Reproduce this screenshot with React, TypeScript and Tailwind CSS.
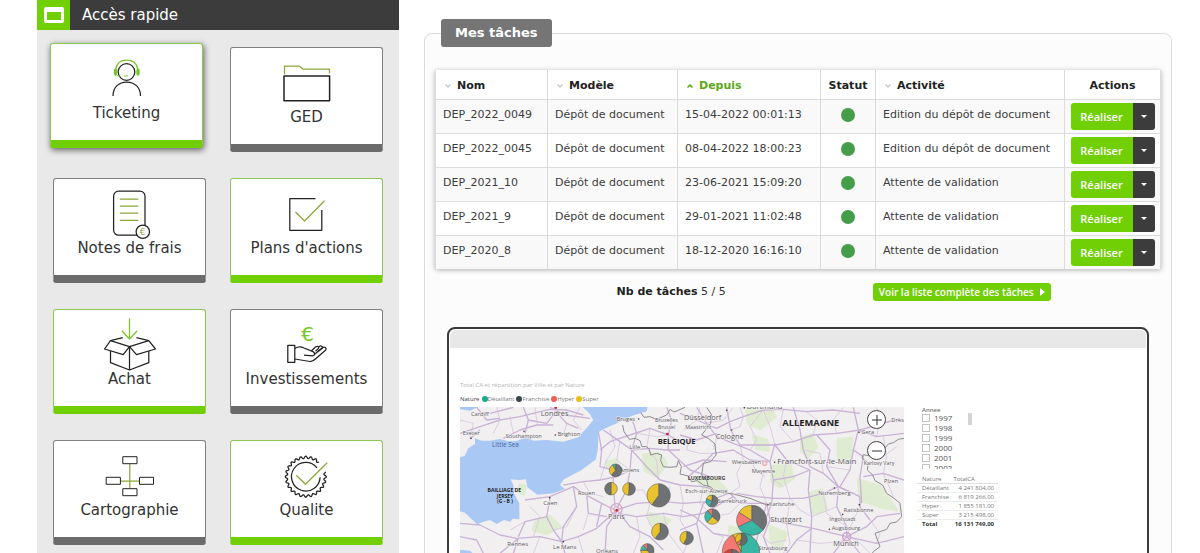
import type { ReactNode } from "react"
import { ChevronDown, ChevronUp } from "lucide-react"

const GREEN = "#76c62a"
const OLIVE = "#8aa83a"
const INK = "#222222"

function gearPath() {
  const points: string[] = []
  for (let deg = -14; deg <= 312; deg += 2) {
    const a = (deg * Math.PI) / 180
    const r = 19.4 + 1.2 * Math.cos(24 * a)
    points.push(`${(28.8 + r * Math.cos(a)).toFixed(2)} ${(27.7 + r * Math.sin(a)).toFixed(2)}`)
  }
  return "M" + points.join("L")
}

const icons: Record<string, ReactNode> = {
  ticketing: (
    <>
      <circle cx="29.5" cy="20" r="8.3" />
      <path d="M16 44C16 35 22 30 29.7 30S43.5 35 43.5 44" />
      <g stroke={GREEN}>
        <path d="M18.6 17C20 11 24.5 8.2 29.6 8.2S39.5 11 40.8 17" />
        <path d="M19 22c1 2 3 2.5 5 2.5M27 24h4" strokeWidth="1" />
        <rect x="17.5" y="17" width="2" height="6" rx="1" fill={GREEN} />
        <rect x="40" y="17" width="2" height="6" rx="1" fill={GREEN} />
      </g>
    </>
  ),
  ged: (
    <>
      <rect x="7" y="20" width="45.6" height="24.7" strokeWidth="1.5" />
      <path d="M7.5 18.2V10.2H22.5L26 13.2H52.5V17.3" stroke={OLIVE} />
    </>
  ),
  notes: (
    <>
      <rect x="13.6" y="4.2" width="31.4" height="44" rx="5" />
      <path d="M19.8 12H38.3M19.8 19H38.3M19.8 26H38.3M19.8 33.3H38.3" stroke={OLIVE} />
      <circle cx="42.8" cy="44.7" r="6.7" fill="white" />
      <text x="42.6" y="48" textAnchor="middle" fontSize="9" fill={OLIVE} stroke="none">€</text>
    </>
  ),
  plans: (
    <>
      <path d="M38.5 11.7H12.8V43.3H44.8V23" />
      <path d="M18.5 25L27.5 34L47.5 13.7" stroke={OLIVE} />
    </>
  ),
  achat: (
    <>
      <path d="M29.5 .3V21M21.8 12.7L29.5 21L37.2 12.7" stroke={GREEN} />
      <path d="M29.5 28.7L10.5 22.7L4.5 31L23.2 36.7ZM29.5 28.7L48.8 22.7L55.5 31L36.5 36.7Z" />
      <path d="M10.5 22.7L22.8 19.7M48.8 22.7L36.5 19.7" />
      <path d="M10.5 33V44.7L29.5 52L48.8 44.7V33M29.5 28.7V52" />
    </>
  ),
  investissements: (
    <>
      <text x="30.5" y="23" textAnchor="middle" fontSize="20" fill={GREEN} stroke="none">€</text>
      <rect x="10.8" y="27.3" width="7" height="17" />
      <path d="M17.8 30.5C21 28.5 24 28.6 27 30L36 33.6C38.5 35 38 37.5 35.5 37.8L27 37.2" />
      <path d="M17.8 41L33 43.5C35 43.5 37 42.5 39 40.5L48.8 32C50 29.8 47.5 28.5 45.8 29.6L38 36" />
      <path d="M34.5 32.8L38.5 29C40.5 27.5 42.5 28.8 41.5 30.5L38.5 33.3M41.5 29.2C43 27 46 28 45.5 30L41 33.6" />
    </>
  ),
  cartographie: (
    <>
      <path d="M29.8 15V39.5M20.5 32H39.5" stroke={OLIVE} />
      <g strokeWidth="1">
        <rect x="22.8" y="7.7" width="14.2" height="7" />
        <rect x="6.2" y="28.3" width="14.2" height="7" />
        <rect x="39.5" y="28.3" width="14" height="7" />
        <rect x="22.8" y="39.7" width="14.2" height="7" />
      </g>
    </>
  ),
  qualite: (
    <>
      <path d={gearPath()} />
      <path d="M43.1 28.2A14.3 14.3 0 1 1 40 18.8" />
      <path d="M19.2 26.3L28.5 35.3L50.2 13.7" stroke={OLIVE} />
    </>
  ),
}

const shortcuts = [
  { icon: "ticketing", label: "Ticketing", green: true, raised: true },
  { icon: "ged", label: "GED", green: false },
  { icon: "notes", label: "Notes de frais", green: false },
  { icon: "plans", label: "Plans d'actions", green: true },
  { icon: "achat", label: "Achat", green: true },
  { icon: "investissements", label: "Investissements", green: false },
  { icon: "cartographie", label: "Cartographie", green: false },
  { icon: "qualite", label: "Qualite", green: true },
]

const tasks = [
  { name: "DEP_2022_0049", since: "15-04-2022 00:01:13", activity: "Edition du dépôt de document" },
  { name: "DEP_2022_0045", since: "08-04-2022 18:00:23", activity: "Edition du dépôt de document" },
  { name: "DEP_2021_10", since: "23-06-2021 15:09:20", activity: "Attente de validation" },
  { name: "DEP_2021_9", since: "29-01-2021 11:02:48", activity: "Attente de validation" },
  { name: "DEP_2020_8", since: "18-12-2020 16:16:10", activity: "Attente de validation" },
]

const legend = [
  { label: "Détaillant", dot: "bg-[#1aab8f]" },
  { label: "Franchise", dot: "bg-[#374649]" },
  { label: "Hyper", dot: "bg-[#ee5f5b]" },
  { label: "Super", dot: "bg-[#e8c21a]" },
]

const years = ["1997", "1998", "1999", "2000", "2001", "2002"]

const totals = [
  ["Détaillant", "4 241 804,00"],
  ["Franchise", "6 819 266,00"],
  ["Hyper", "1 855 181,00"],
  ["Super", "3 215 498,00"],
]

const T = "#2bb3a0"
const F = "#66696b"
const H = "#f5706b"
const S = "#e9bf20"

type Slice = [string, number]

const pies: { x: number; y: number; r: number; slices: Slice[] }[] = [
  { x: 497, y: 301, r: 19, slices: [[F, 0.62], [S, 0.3], [T, 0.08]] },
  { x: 483, y: 356, r: 19, slices: [[S, 0.5], [F, 0.5]] },
  { x: 537, y: 357, r: 19, slices: [[F, 0.52], [S, 0.48]] },
  { x: 626, y: 376, r: 35, slices: [[F, 0.6], [S, 0.4]] },
  { x: 630, y: 485, r: 25, slices: [[F, 0.6], [S, 0.4]] },
  { x: 592, y: 541, r: 20, slices: [[F, 0.4], [S, 0.35], [T, 0.15], [H, 0.1]] },
  { x: 786, y: 393, r: 18, slices: [[F, 0.55], [T, 0.27], [S, 0.18]] },
  { x: 787, y: 440, r: 23, slices: [[F, 0.36], [S, 0.26], [T, 0.28], [H, 0.1]] },
  { x: 710, y: 504, r: 20, slices: [[F, 0.58], [S, 0.42]] },
  { x: 905, y: 451, r: 45, slices: [[F, 0.36], [T, 0.32], [H, 0.16], [S, 0.16]] },
  { x: 873, y: 545, r: 56, slices: [[T, 0.6], [H, 0.33], [S, 0.07]] },
  { x: 845, y: 566, r: 28, slices: [[F, 0.3], ["#c9403c", 0.7]] },
  { x: 874, y: 508, r: 18, slices: [[F, 0.55], [H, 0.1], [S, 0.35]] },
]

const cities: [string, number, number, number][] = [
  ["Cardiff", 63, 137, 17],
  ["Londres", 272, 139, 22],
  ["Exeter", 38, 195, 17],
  ["Southampton", 167, 205, 17],
  ["Brighton", 323, 199, 17],
  ["Bruges", 500, 154, 17],
  ["Bruxelles", 615, 157, 16],
  ["Brussel", 624, 176, 15],
  ["Lille", 538, 238, 18],
  ["Amiens", 509, 307, 17],
  ["Rouen", 384, 376, 17],
  ["Caen", 280, 405, 18],
  ["Paris", 474, 447, 22],
  ["Rennes", 172, 527, 18],
  ["Le Mans", 309, 537, 18],
  ["Orléans", 438, 549, 18],
  ["Dortmund", 890, 118, 22],
  ["Düsseldorf", 702, 151, 22],
  ["Maastricht", 706, 178, 16],
  ["Cologne", 797, 208, 22],
  ["Wiesbaden", 845, 283, 17],
  ["Francfort-sur-le-Main", 982, 281, 24],
  ["Mayence", 905, 309, 17],
  ["Gera", 1234, 193, 17],
  ["Dresde", 1324, 155, 17],
  ["Karlovy Vary", 1241, 284, 16],
  ["Plzen", 1302, 339, 17],
  ["Nuremberg", 1105, 376, 18],
  ["Esch-sur-Alzette", 706, 368, 17],
  ["Sarrebruck", 803, 399, 17],
  ["Karlsruhe", 957, 409, 17],
  ["Stuttgart", 961, 455, 23],
  ["Ratisbonne", 1181, 425, 17],
  ["Ingolstadt", 1138, 454, 17],
  ["Augsbourg", 1145, 481, 17],
  ["Munich", 1150, 528, 22],
  ["Strasbourg", 925, 541, 17],
]

const towns = [
  [316, 195], [566, 147], [63, 205], [222, 184], [883, 113], [845, 180], [830, 121], [974, 277],
  [1227, 187], [1153, 354], [954, 404], [1228, 404], [1178, 433], [1138, 478], [299, 383], [340, 515],
]

const roads = [
  "M30 190L90 170L150 150L210 140L270 125L300 118L350 120L400 135",
  "M80 112L110 150L150 145M60 206L90 180M220 112L235 150L225 190M235 150L290 160L318 125L350 160L385 175",
  "M160 205L210 180L260 165L310 165M318 120L300 112M318 120L345 135L420 145M120 130L190 112",
  "M30 460L90 465L150 495L200 505L270 500L335 515L385 500L440 475L495 425",
  "M205 500L225 455L290 440M205 505L190 550M150 550L205 505M100 550L80 510L30 500",
  "M225 390L300 380L370 350L400 370L455 400L495 420M300 385L290 440L310 480L335 515L345 550",
  "M340 345L400 335L450 330L500 320L545 300M445 185L455 240L450 290L490 300L490 350L495 410",
  "M460 180L510 215L545 240L600 235L650 240L690 240M545 145L560 190L545 240L540 300L530 360L500 415",
  "M545 240L590 290L630 330L690 345L760 350L835 370M500 420L560 400L640 395L700 400L770 395",
  "M500 425L470 470L465 550M505 425L540 470L600 500L640 540M505 430L560 440L640 430L700 440L760 430L850 380",
  "M450 240L480 215L540 195L600 175L655 195L690 215M655 195L665 150L650 112M655 200L655 240L720 300L780 320",
  "M370 350L380 410L340 470L335 515M410 370L415 430L470 440M455 400L440 470",
  "M690 130L740 150L800 175L840 155L880 140L940 120L1000 118L1070 125L1150 120L1230 130",
  "M740 112L770 160L800 200L850 220L900 240L960 275L970 330L965 400L950 440",
  "M830 112L842 180L870 225L975 225L1030 215L1090 195L1160 190L1230 180L1350 145",
  "M975 220L960 275L900 270L850 240L790 250L750 290L715 320",
  "M1030 112L1050 180L1060 240L1080 290L1120 310L1165 350L1210 370",
  "M975 225L1010 270L1080 300L1030 320L970 330M1080 300L1075 360L1085 440L1080 550",
  "M1165 355L1160 410L1190 470L1190 500L1250 470L1280 440L1350 430",
  "M1165 350L1230 380L1230 410L1260 450M1165 350L1120 370L1060 385L970 385L920 380L860 370",
  "M1210 112L1225 180L1210 240L1200 300L1170 350M1225 180L1280 200L1362 190M1210 240L1240 260L1230 320L1235 400",
  "M840 370L870 400L950 400L960 450L1010 460L1090 475L1190 500L1280 520L1362 500",
  "M835 370L760 400L740 460L690 480M740 460L760 550M950 400L930 470L910 550M1190 500L1150 550M1190 500L1230 550",
  "M960 450L940 500L960 550M1085 475L1040 510L1010 550M1240 320L1300 310L1362 330M690 195L740 210L800 190",
  "M700 290L760 270L830 275M690 420L735 440L790 490L850 500L930 490M1100 195L1140 240L1130 290L1165 350",
]

const minorRoads = [
  "M30 150L70 160L60 206M130 190L150 150L140 112M180 140L190 190M255 112L262 165M350 160L340 195M390 112L370 150L395 180",
  "M480 180L495 230L470 270L450 330M510 215L500 270L540 300M600 175L590 235L620 270L625 330M560 190L620 200L655 195",
  "M400 335L420 370L460 380M530 360L580 360L600 400L590 440L620 500M560 440L570 500L550 550M640 430L655 490L700 550",
  "M225 455L180 480M250 550L270 500M240 410L270 440L250 500M385 500L400 550M310 480L350 470L380 410M415 430L400 480",
  "M690 345L700 400L690 450L720 500L700 550M640 395L660 350M760 350L750 400L790 440L840 430L870 400",
  "M700 180L740 150L750 112M720 200L710 240L750 250L790 250M770 160L820 150L850 112M800 200L790 240M870 112L880 140L870 170L842 180",
  "M870 225L880 270L860 310L870 350L840 370M900 240L920 210L900 170L940 120M940 310L930 350L950 400M905 270L915 300L945 320",
  "M940 120L960 170L975 225M1000 118L990 170L1030 215M1090 195L1100 150L1070 125M1160 190L1150 150L1180 112",
  "M1010 270L1000 320L1020 385L1010 460M1120 310L1110 250L1060 240M1130 290L1200 300M1120 370L1130 430L1190 470",
  "M1160 410L1110 430L1085 440M1230 410L1210 450L1190 500M1260 450L1290 490L1280 520M1300 200L1310 260L1300 310L1330 380",
  "M1020 385L1050 420L1085 440M970 330L1000 350M1280 112L1290 150L1280 200M1340 230L1300 260M1010 460L1020 520L1000 550",
  "M1190 500L1220 510L1270 560M1190 500L1170 515L1110 520L1040 510M800 550L820 500L790 490M930 490L960 520L1010 510",
]

const coast =
  "M30 262L44 258L55 235L75 222L75 205L95 212L120 212L150 207L175 214L200 213L230 200L250 212L290 210L340 215L385 202L412 172L430 150L418 130L398 111" +
  "L592 111L590 124L545 138L510 155L462 177L446 186L443 240L438 268L395 300L342 328L330 345L345 357L310 370L262 374L232 352L228 328L205 330L182 328L190 345" +
  "L192 370L208 400L208 448L188 446L180 455L162 450L140 462L120 450L100 455L82 463L65 448L45 428L30 424Z"

const forests = [
  "M890 112L960 115L975 140L930 175L895 160Z",
  "M1055 205L1085 195L1100 230L1075 260L1055 245Z",
  "M1165 210L1205 205L1200 260L1165 270Z",
  "M965 290L1020 285L1030 325L990 350L965 335Z",
  "M1080 370L1115 360L1130 420L1090 430Z",
  "M1225 330L1290 350L1340 420L1290 410L1230 390Z",
  "M580 255L625 250L650 280L620 320L585 300Z",
  "M260 450L300 440L330 470L290 490L250 480Z",
  "M910 200L950 210L955 240L920 235Z",
  "M840 470L900 490L890 540L835 520Z",
  "M740 330L800 330L830 360L780 380Z",
  "M600 430L660 450L640 470L600 460Z",
  "M960 470L1010 490L990 540L965 520Z",
  "M210 345L225 350L220 372L205 365Z",
  "M470 275L500 270L495 290L472 290Z",
]

const borders = [
  "M518 165L522 185L538 208L556 205L570 212L576 230L590 230L598 238L602 255L620 250L635 255L632 272L640 290L660 292L680 290L685 272L694 290L690 312L715 318L725 335L742 332L760 345L780 350L800 366L850 372L900 385L950 405",
  "M572 128L582 142L600 140L620 148L650 135L660 118L672 126L682 122L705 112M770 112L785 135L782 160L755 195L775 205L795 222L798 255L782 275L760 280L755 315L770 330L775 350",
  "M1362 205L1345 208L1330 218L1315 222L1300 240L1275 245L1260 258L1240 254L1236 264L1255 280L1252 300L1268 315L1275 332L1298 345L1310 370L1332 385L1350 400L1355 440L1340 456L1320 460L1310 478L1275 490L1290 530L1270 545L1260 560",
]

function Pie({ x, y, r, slices }: { x: number; y: number; r: number; slices: Slice[] }) {
  let start = 0
  return (
    <g stroke="#444" strokeWidth="1.5" opacity="0.93">
      {slices.map(([color, share], index) => {
        const a = start * 2 * Math.PI
        start += share
        const b = start * 2 * Math.PI
        const large = share > 0.5 ? 1 : 0
        return (
          <path
            key={index}
            fill={color}
            d={`M${x} ${y}L${x + r * Math.sin(a)} ${y - r * Math.cos(a)}A${r} ${r} 0 ${large} 1 ${x + r * Math.sin(b)} ${y - r * Math.cos(b)}Z`}
          />
        )
      })}
    </g>
  )
}

function SalesMap() {
  return (
    <svg viewBox="30 111 1332 480" className="block w-full font-['Open_Sans',sans-serif]" role="img">
      <rect x="30" y="111" width="1332" height="480" fill="#f2eff0" />
      {forests.map((d) => (
        <path key={d} d={d} fill="#e0ecd2" stroke="#e0ecd2" strokeWidth="10" strokeLinejoin="round" />
      ))}
      <path d={coast} fill="#a9c8f4" />
      <path d="M30 111H84L60 122L30 118ZM30 540L60 542L78 560L70 591H30Z" fill="#a9c8f4" />
      <g fill="none" strokeLinejoin="round">
        {minorRoads.map((d) => (
          <path key={d} d={d} stroke="#dccde2" strokeWidth="3" />
        ))}
        {roads.map((d) => (
          <path key={d} d={d} stroke="#c9b3d6" strokeWidth="4" />
        ))}
        {borders.map((d) => (
          <path key={d} d={d} stroke="#8f8c92" strokeWidth="3" />
        ))}
        <circle cx="499" cy="418" r="17" stroke="#d3a6cf" strokeWidth="4" />
        <circle cx="499" cy="418" r="8" stroke="#d79bc0" strokeWidth="3" />
        <circle cx="1190" cy="500" r="12" stroke="#d0a0c8" strokeWidth="4" />
        <circle cx="944" cy="280" r="6" stroke="#eeb4bd" strokeWidth="5" />
      </g>
      <g fill="#cc2233">
        <circle cx="317" cy="113" r="4" />
        <circle cx="652" cy="192" r="4" />
        <circle cx="500" cy="421" r="4" />
      </g>
      <g fill="#444">
        {towns.map(([x, y]) => (
          <circle key={`${x}-${y}`} cx={x} cy={y} r="2.5" />
        ))}
        {cities.map(([name, x, y, size]) => (
          <text key={name} x={x} y={y} fontSize={size} fill="#5c5a60" stroke="#f4f1f4" strokeWidth="3" paintOrder="stroke">
            {name}
          </text>
        ))}
      </g>
      <text x="126" y="231" fontSize="19" fill="#41649f">Little Sea</text>
      <g fill="#222" fontWeight="700">
        <text x="623" y="223" fontSize="23">BELGIQUE</text>
        <text x="997" y="168" fontSize="28">ALLEMAGNE</text>
        <text x="713" y="330" fontSize="16" fill="#444">LUXEMBOURG</text>
        <g fontSize="15" textAnchor="middle">
          <text x="163" y="366">BAILLIAGE DE</text>
          <text x="165" y="383">JERSEY</text>
          <text x="165" y="400">(G - B )</text>
        </g>
      </g>
      {pies.map((pie) => (
        <Pie key={`${pie.x}-${pie.y}`} {...pie} />
      ))}
    </svg>
  )
}

function QuickAccess() {
  return (
    <aside className="w-[362px] shrink-0 bg-[#e9e9e9]">
      <header className="flex h-[30px] items-center bg-[#3c3c3c]">
        <span className="flex h-full w-[33px] items-center justify-center bg-[#71cf05]">
          <span className="h-4 w-5 rounded-[2px] border-[3px] border-t-[5px] border-white" />
        </span>
        <h2 className="pl-3 text-[15px] text-white">Accès rapide</h2>
      </header>
      <nav className="grid grid-cols-2 gap-x-6 gap-y-[26px] px-4 pt-[17px] pb-6">
        {shortcuts.map((item) => (
          <a
            key={item.label}
            href="#"
            className={`flex h-[105px] flex-col items-center rounded-[3px] border border-b-8 bg-white pt-2 ${
              item.green ? "border-[#8cc851] border-b-[#71cf05]" : "border-[#808080] border-b-[#6b6b6b]"
            } ${item.raised ? "-translate-x-[3px] -translate-y-1 shadow-[1px_2px_6px_rgba(0,0,0,0.6)]" : ""}`}
          >
            <svg
              viewBox="0 0 60 52"
              className="h-[52px] w-[60px] overflow-visible"
              fill="none"
              stroke={INK}
              strokeWidth="1.25"
              strokeLinejoin="round"
            >
              {icons[item.icon]}
            </svg>
            <span className="text-[15px] leading-[18px] text-[#333]">{item.label}</span>
          </a>
        ))}
      </nav>
    </aside>
  )
}

function TaskTable() {
  const head = "border-l border-[#dcdcdc] pt-0.5 text-left font-bold"
  const cell = "border-l border-[#dcdcdc] px-[7px] pt-[7px] align-top"
  return (
    <table className="w-full table-fixed border-separate border-spacing-0 border-r border-[#dcdcdc] bg-white text-[11px] leading-4 shadow-[0_1px_5px_rgba(0,0,0,0.3)]">
      <colgroup>
        <col className="w-28" />
        <col className="w-[130px]" />
        <col className="w-[143px]" />
        <col className="w-[55px]" />
        <col />
        <col className="w-24" />
      </colgroup>
      <thead>
        <tr className="h-[29px] text-[#222]">
          <th className={head}>
            <span className="flex items-center gap-[5px] pl-2">
              <ChevronDown className="size-2 text-[#c4c4c4]" strokeWidth={4} />
              Nom
            </span>
          </th>
          <th className={head}>
            <span className="flex items-center gap-[5px] pl-2">
              <ChevronDown className="size-2 text-[#c4c4c4]" strokeWidth={4} />
              Modèle
            </span>
          </th>
          <th className={head}>
            <span className="flex items-center gap-[5px] pl-2 text-[#5aa81c]">
              <ChevronUp className="size-2" strokeWidth={5} />
              Depuis
            </span>
          </th>
          <th className="border-l border-[#dcdcdc] pt-0.5 text-center">Statut</th>
          <th className={head}>
            <span className="flex items-center gap-[5px] pl-2">
              <ChevronDown className="size-2 text-[#c4c4c4]" strokeWidth={4} />
              Activité
            </span>
          </th>
          <th className="border-l border-[#dcdcdc] pt-0.5 text-center">Actions</th>
        </tr>
      </thead>
      <tbody>
        {tasks.map((task) => (
          <tr key={task.name} className="h-[34px] text-[#3c3c3c] odd:bg-[#f9f9f9] [&>td]:border-t">
            <td className={cell}>{task.name}</td>
            <td className={cell}>Dépôt de document</td>
            <td className={cell}>{task.since}</td>
            <td className={cell}>
              <span className="mx-auto mt-px block size-3.5 rounded-full bg-[#449d48]" />
            </td>
            <td className={cell}>{task.activity}</td>
            <td className="border-l border-[#dcdcdc] py-0 align-middle">
              <div className="mx-auto flex h-[27px] w-[84px] overflow-hidden rounded-[3px] font-['Open_Sans',sans-serif] font-semibold text-white">
                <button type="button" className="flex-1 bg-[#71cf05]">
                  Réaliser
                </button>
                <button type="button" aria-label="Plus d'actions" className="flex w-[22px] items-center justify-center bg-[#3c3c3c]">
                  <svg viewBox="0 0 6 3" className="h-[3px] w-1.5" fill="white">
                    <path d="M0 0H6L3 3Z" />
                  </svg>
                </button>
              </div>
            </td>
          </tr>
        ))}
      </tbody>
    </table>
  )
}

function YearFilter() {
  return (
    <div className="flex h-[62px] overflow-hidden">
      <fieldset className="w-[46px]">
        <legend className="text-[6px] leading-[6px] font-semibold text-[#777]">Annee</legend>
        {years.map((year) => (
          <label key={year} className="flex h-[10px] items-center gap-1 text-[8px] leading-[10px] text-[#555]">
            <input type="checkbox" className="size-2 appearance-none border border-[#c4c4c4] bg-white" />
            {year}
          </label>
        ))}
      </fieldset>
      <span className="mt-1.5 h-3 w-1 bg-[#d4d4d4]" />
    </div>
  )
}

function TotalsTable() {
  return (
    <table className="w-[81px] text-[6px] leading-[8px] text-[#777]">
      <thead>
        <tr className="border-b border-[#e0e0e0]">
          <th className="pl-[5px] text-left font-normal">Nature</th>
          <th className="pl-0.5 text-left font-normal">TotalCA</th>
        </tr>
      </thead>
      <tbody>
        {totals.map(([nature, amount]) => (
          <tr key={nature} className="border-b border-[#ececec]">
            <td className="pl-[5px]">{nature}</td>
            <td className="pr-1 text-right">{amount}</td>
          </tr>
        ))}
      </tbody>
      <tfoot>
        <tr className="font-bold text-[#333]">
          <td className="pl-[5px]">Total</td>
          <td className="pr-1 text-right">16 131 749,00</td>
        </tr>
      </tfoot>
    </table>
  )
}

function Report() {
  const zoomButton =
    "flex size-[19px] items-center justify-center rounded-full border border-[#444] bg-white text-[#333]"
  return (
    <section className="mx-3 mt-[26px] min-h-[300px] rounded-lg border-2 border-[#3a3a3a] bg-white font-['Open_Sans',sans-serif]">
      <div className="mx-px mt-px h-[18px] rounded-t-md bg-[#e8e8e8]" />
      <div className="pt-[31px] pl-[11px]">
        <h3 className="text-[6px] leading-3 text-[#b4b4b4]">Total CA et répartition par Ville et par Nature</h3>
        <div className="mt-0.5 flex items-center gap-0.5 text-[6px] leading-3 text-[#777]">
          <span className="text-[#444]">Nature</span>
          {legend.map((item) => (
            <span key={item.label} className="flex items-center">
              <span className={`size-1.5 rounded-full ${item.dot}`} />
              {item.label}
            </span>
          ))}
        </div>
        <div className="mt-0.5 flex">
          <div className="relative w-[444px]">
            <SalesMap />
            <div className="absolute top-[3px] right-[18px] flex flex-col gap-3">
              <button type="button" aria-label="Zoom avant" className={zoomButton}>
                <svg viewBox="0 0 10 10" className="size-2.5" stroke="currentColor">
                  <path d="M5 0V10M0 5H10" />
                </svg>
              </button>
              <button type="button" aria-label="Zoom arrière" className={zoomButton}>
                <svg viewBox="0 0 10 10" className="size-2.5" stroke="currentColor">
                  <path d="M0 5H10" />
                </svg>
              </button>
            </div>
          </div>
          <div className="pl-[13px]">
            <div className="pl-[5px]">
              <YearFilter />
            </div>
            <div className="mt-1.5">
              <TotalsTable />
            </div>
          </div>
        </div>
      </div>
    </section>
  )
}

export default function App() {
  return (
    <div className="flex h-screen overflow-hidden bg-white pl-[37px] font-['DejaVu_Sans',sans-serif]">
      <QuickAccess />
      <main className="min-w-0 flex-1 pt-[19px] pr-7 pl-[25px]">
        <fieldset className="min-h-[600px] min-w-0 rounded-lg border border-[#dcdcdc] bg-[#fcfcfc] px-2.5 pt-[23px]">
          <legend className="ml-1.5 rounded-[3px] bg-[#757575] px-3.5 text-[13px] leading-7 font-bold text-white">
            Mes tâches
          </legend>
          <TaskTable />
          <div className="mt-[14px] flex items-center gap-[147px] pl-[25%] text-[11px] text-[#333]">
            <p>
              <b className="text-[#222]">Nb de tâches</b> 5 / 5
            </p>
            <a
              href="#"
              className="flex h-[18px] items-center gap-1.5 rounded-[3px] bg-[#71cf05] px-1.5 font-['Open_Sans',sans-serif] text-[10px] font-semibold text-white"
            >
              Voir la liste complète des tâches
              <svg viewBox="0 0 5 8" className="h-2 w-[5px]" fill="white">
                <path d="M0 0L5 4L0 8Z" />
              </svg>
            </a>
          </div>
          <Report />
        </fieldset>
      </main>
    </div>
  )
}
